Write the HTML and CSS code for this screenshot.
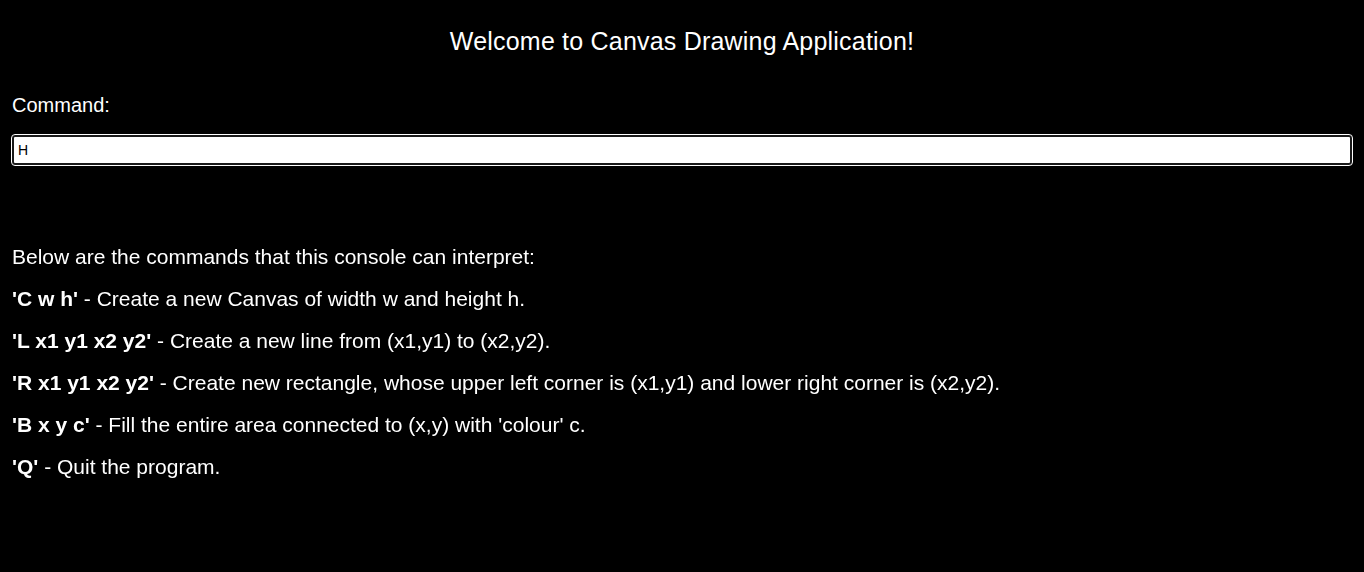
FILE: index.html
```html
<!DOCTYPE html>
<html>
<head>
<meta charset="utf-8">
<link rel="stylesheet" href="styles.css">
</head>
<body>
<div class="app">
  <h1 class="title">Welcome to Canvas Drawing Application!</h1>
  <label class="label" for="cmd">Command:</label>
  <input class="cmd" id="cmd" type="text" value="H" autofocus>
  <div class="help">
    <p>Below are the commands that this console can interpret:</p>
    <p><b>'C w h'</b> - Create a new Canvas of width w and height h.</p>
    <p><b>'L x1 y1 x2 y2'</b> - Create a new line from (x1,y1) to (x2,y2).</p>
    <p><b>'R x1 y1 x2 y2'</b> - Create new rectangle, whose upper left corner is (x1,y1) and lower right corner is (x2,y2).</p>
    <p><b>'B x y c'</b> - Fill the entire area connected to (x,y) with 'colour' c.</p>
    <p><b>'Q'</b> - Quit the program.</p>
  </div>
</div>
</body>
</html>
```
FILE: styles.css
```css
html, body {
  margin: 0;
  padding: 0;
  background: #000;
  color: #fff;
  font-family: "Liberation Sans", Arial, sans-serif;
}
.app {
  padding: 0 12px;
  display: flex;
  flex-direction: column;
}
.title {
  font-size: 25px;
  font-weight: normal;
  letter-spacing: 0.2px;
  text-align: center;
  line-height: 30px;
  margin: 26px 0 0 0;
}
.label {
  font-size: 20px;
  line-height: 24px;
  margin-top: 37px;
}
.cmd {
  margin-top: 18px;
  box-sizing: border-box;
  width: 100%;
  height: 30px;
  border: 2px solid #1a1a1a;
  border-radius: 3px;
  outline: 1px solid #fff;
  background: #fff;
  color: #000;
  caret-color: #000;
  font-family: "Liberation Sans", Arial, sans-serif;
  font-size: 14px;
  padding: 0 4px;
}
.help {
  margin-top: 80px;
}
.help p {
  font-size: 21px;
  line-height: 24px;
  margin: 0 0 18px 0;
}
```
